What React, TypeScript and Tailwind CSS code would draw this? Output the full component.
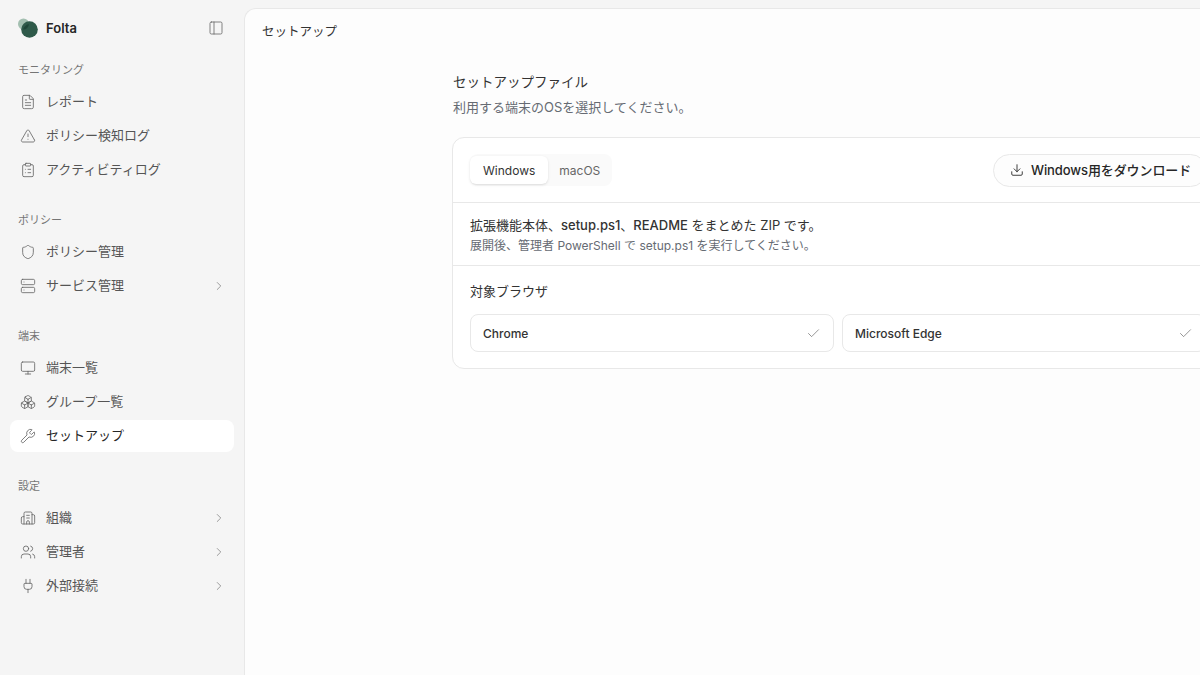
import React from 'react';
import {
  AlertTriangle,
  Check,
  ChevronRight,
  ClipboardList,
  Download,
  FileText,
  Monitor,
  PanelLeft,
  Plug,
  Server,
  Shield,
  Users,
  Wrench,
  Building2,
  Boxes,
} from 'lucide-react';

type NavItem = {
  label: string;
  icon: React.ComponentType<{ className?: string; strokeWidth?: number }>;
  chevron?: boolean;
  active?: boolean;
};

type NavGroup = {
  title: string;
  items: NavItem[];
};

const navGroups: NavGroup[] = [
  {
    title: 'モニタリング',
    items: [
      { label: 'レポート', icon: FileText },
      { label: 'ポリシー検知ログ', icon: AlertTriangle },
      { label: 'アクティビティログ', icon: ClipboardList },
    ],
  },
  {
    title: 'ポリシー',
    items: [
      { label: 'ポリシー管理', icon: Shield },
      { label: 'サービス管理', icon: Server, chevron: true },
    ],
  },
  {
    title: '端末',
    items: [
      { label: '端末一覧', icon: Monitor },
      { label: 'グループ一覧', icon: Boxes },
      { label: 'セットアップ', icon: Wrench, active: true },
    ],
  },
  {
    title: '設定',
    items: [
      { label: '組織', icon: Building2, chevron: true },
      { label: '管理者', icon: Users, chevron: true },
      { label: '外部接続', icon: Plug, chevron: true },
    ],
  },
];

function Sidebar() {
  return (
    <aside className="w-[244px] shrink-0 h-full bg-[#f5f5f5] flex flex-col">
      <div className="h-[56px] flex items-center justify-between pl-[18px] pr-[20px]">
        <div className="flex items-center gap-[8px]">
          <svg width="20" height="20" viewBox="0 0 20 20">
            <circle cx="5.5" cy="6" r="5.5" fill="#a3bfb0" />
            <circle cx="11.5" cy="11.5" r="8.3" fill="#2f5a4a" />
            <path d="M5 11.6 A5.5 5.5 0 0 0 10.9 6 A8.3 8.3 0 0 0 5 11.6 Z" fill="#1f4638" />
          </svg>
          <span className="text-[13px] font-semibold text-[#262626] mt-[1px]">Folta</span>
        </div>
        <PanelLeft className="w-[16px] h-[16px] text-[#6b6b6b]" strokeWidth={1.25} />
      </div>

      <nav className="flex flex-col px-[10px]">
        {navGroups.map((group) => (
          <div key={group.title} className="mb-[20px] last:mb-0">
            <div className="h-[28px] px-[8px] flex items-center text-[11px] text-[#757575]">{group.title}</div>
            <div className="flex flex-col gap-[2px] mt-[2px]">
              {group.items.map((item) => (
                <div
                  key={item.label}
                  className={`h-[32px] pl-[10px] pr-[8px] flex items-center gap-[10px] rounded-lg text-[13px] ${
                    item.active ? 'bg-white text-[#262626]' : 'text-[#555555]'
                  }`}
                >
                  <item.icon className="w-[16px] h-[16px] shrink-0 text-[#666666]" strokeWidth={1.25} />
                  <span className="flex-1">{item.label}</span>
                  {item.chevron && <ChevronRight className="w-[14px] h-[14px] text-[#8f8f8f]" strokeWidth={1.5} />}
                </div>
              ))}
            </div>
          </div>
        ))}
      </nav>
    </aside>
  );
}

function BrowserOption({ name }: { name: string }) {
  return (
    <div className="flex-1 h-[38px] px-[12px] flex items-center justify-between rounded-lg border border-[#e8e8e8] bg-white text-[12px] font-[450] text-[#333333]">
      <span className="mt-[1px]">{name}</span>
      <Check className="w-[15px] h-[15px] text-[#666666]" strokeWidth={1.1} />
    </div>
  );
}

function SetupCard() {
  return (
    <div className="w-[772px] rounded-xl border border-[#e8e8e8] bg-white">
      <div className="h-[65px] px-[17px] flex items-center justify-between border-b border-[#e8e8e8]">
        <div className="flex items-center h-[32px] rounded-lg bg-[#fafafa] pr-[12px]">
          <div className="h-[28px] px-[13px] flex items-center rounded-md bg-white shadow-sm text-[12px] text-[#333333] pt-[2px]">Windows</div>
          <div className="pl-[11px] pt-[2px] text-[12px] text-[#666666]">macOS</div>
        </div>
        <button className="h-[33px] w-[214px] pl-[16px] mr-[-1px] flex items-center gap-[7px] rounded-full border border-[#e8e8e8] bg-[#fdfdfd] text-[13px] font-[450] text-[#262626]">
          <Download className="w-[14px] h-[14px]" strokeWidth={1.5} />
          <span className="mt-[1px] tracking-[-0.1px]">Windows用をダウンロード</span>
        </button>
      </div>
      <div className="h-[63px] px-[17px] pt-[12px] border-b border-[#e8e8e8]">
        <p className="text-[13px] leading-[20px] text-[#333333]">
          拡張機能本体、<span className="font-medium">setup.ps1</span>、<span className="font-medium">README</span> をまとめた ZIP です。
        </p>
        <p className="text-[12px] leading-[20px] mt-[1px] text-[#666b73]">展開後、管理者 PowerShell で setup.ps1 を実行してください。</p>
      </div>
      <div className="px-[17px] pt-[15px] pb-[16px]">
        <p className="text-[13px] leading-[20px] text-[#333333]">対象ブラウザ</p>
        <div className="flex gap-[8px] mt-[13px]">
          <BrowserOption name="Chrome" />
          <BrowserOption name="Microsoft Edge" />
        </div>
      </div>
    </div>
  );
}

export default function App() {
  return (
    <div
      className="w-[1200px] h-[675px] overflow-hidden flex bg-[#f5f5f5]"
      style={{ fontFamily: 'Inter, "Noto Sans CJK JP", sans-serif' }}
    >
      <Sidebar />
      <main className="w-[1186px] shrink-0 h-[675px] mt-[8px] rounded-tl-xl border-l border-t border-[#e8e8e8] bg-[#fdfdfd]">
        <div className="h-[44px] pl-[17px] pt-[2px] flex items-center text-[12.5px] text-[#333333]">セットアップ</div>
        <div className="pl-[207px] pt-[17px]">
          <h1 className="ml-[1px] text-[13.5px] leading-[24px] text-[#333333]">セットアップファイル</h1>
          <p className="ml-[1px] text-[13px] leading-[20px] mt-[3px] text-[#666b73]">利用する端末のOSを選択してください。</p>
          <div className="mt-[20px]">
            <SetupCard />
          </div>
        </div>
      </main>
    </div>
  );
}
